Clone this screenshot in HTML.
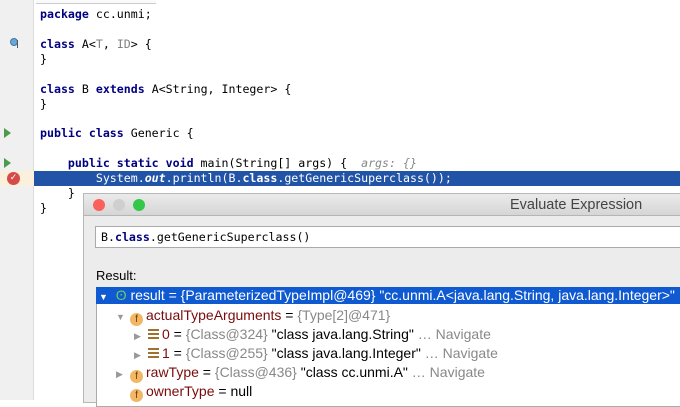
<!DOCTYPE html>
<html><head><style>
*{margin:0;padding:0;box-sizing:border-box}
body{width:680px;height:400px;overflow:hidden;background:#fff;position:relative;font-family:"DejaVu Sans Mono",monospace}
.gut{position:absolute;left:0;top:0;width:34px;height:400px;background:#f0f0f0;border-right:1px solid #ddd}
.l{position:absolute;left:40px;font-size:11.6px;line-height:15px;white-space:pre;color:#000}
.k{color:#000080;font-weight:bold}
.g{color:#808080}
.sel{position:absolute;left:34px;top:171px;width:646px;height:15px;background:#2154a6}
.run{position:absolute;left:4px;width:0;height:0;border-left:7px solid #4c9a4c;border-top:5px solid transparent;border-bottom:5px solid transparent}
.dlg{position:absolute;left:83px;top:193px;width:600px;height:210px;background:#ececec;border:1px solid #b8b8b8;font-family:"Liberation Sans",sans-serif}
.tb{height:22px;background:linear-gradient(#ebebeb,#d6d6d6);border-bottom:1px solid #b5b5b5;position:relative}
.dot{position:absolute;top:5px;width:12px;height:12px;border-radius:50%}
.row{position:absolute;left:12px;width:590px;height:19px;font-size:14px;line-height:19px;white-space:nowrap;color:#000}
.f{display:inline-block;width:13px;height:13px;border-radius:50%;background:#f2b765;color:#6b3c00;font-size:10px;line-height:13px;text-align:center;vertical-align:-2px;margin-right:3px}
.arr{color:#999;font-size:9px;display:inline-block;width:14px}
.n{color:#7a0b0b}
.gr{color:#888}
.bars{display:inline-block;width:11px;height:11px;vertical-align:-1px;margin-right:3px;background:repeating-linear-gradient(#a07030 0 2px,transparent 2px 4px)}
</style></head><body>
<div class="gut"></div>
<div style="position:absolute;left:36px;top:0;width:120px;height:4px;border-bottom:1px solid #ccc;background:#fafafa"></div>
<div style="position:absolute;left:10px;top:38px;width:8px;height:8px;border-radius:50%;background:#6aa6d6;border:1px solid #3a78b0"></div>
<div style="position:absolute;left:17px;top:40px;width:1px;height:8px;background:#555"></div>
<div class="run" style="top:128px"></div>
<div class="run" style="top:158px"></div>
<div style="position:absolute;left:0;top:171px;width:34px;height:15px;background:#faf0dc"></div>
<div style="position:absolute;left:7px;top:172px;width:13px;height:13px;border-radius:50%;background:#d64a4a;color:#fff;font-size:9px;line-height:13px;text-align:center;font-family:'DejaVu Sans'">✓</div>
<div class="sel"></div>
<div class="l" style="top:7px"><span class="k">package</span> cc.unmi;</div>
<div class="l" style="top:37px"><span class="k">class</span> A&lt;<span class="g">T</span>, <span class="g">ID</span>&gt; {</div>
<div class="l" style="top:52px">}</div>
<div class="l" style="top:82px"><span class="k">class</span> B <span class="k">extends</span> A&lt;String, Integer&gt; {</div>
<div class="l" style="top:97px">}</div>
<div class="l" style="top:126px"><span class="k">public class</span> Generic {</div>
<div class="l" style="top:156px">    <span class="k">public static void</span> main(String[] args) {  <i style="color:#888">args: {}</i></div>
<div class="l" style="top:171px;color:#fff">        System.<b><i>out</i></b>.println(B.<b>class</b>.getGenericSuperclass());</div>
<div class="l" style="top:186px">    }</div>
<div class="l" style="top:201px">}</div>
<div class="dlg">
 <div class="tb">
  <div class="dot" style="left:9px;background:#fc605c"></div>
  <div class="dot" style="left:29px;background:#cfcfcf"></div>
  <div class="dot" style="left:49px;background:#34c84a"></div>
  <div style="position:absolute;left:426px;top:3px;font-size:14.5px;color:#444">Evaluate Expression</div>
 </div>
 <div style="position:absolute;left:11px;top:32px;width:590px;height:22px;background:#fff;border:1px solid #aaa;font-family:'DejaVu Sans Mono',monospace;font-size:11.6px;line-height:20px;padding-left:5px">B.<span class="k">class</span>.getGenericSuperclass()</div>
 <div style="position:absolute;left:12px;top:74px;font-size:13px">Result:</div>
 <div style="position:absolute;left:12px;top:93px;width:590px;height:120px;background:#fff;border:1px solid #aaa"></div>
 <div class="row" style="top:93px;height:17px;line-height:17px;background:#0f5ad0;color:#fff;padding-left:3px"><span style="font-size:9px">▼</span>&nbsp; <span style="color:#6c6">ʘ</span> result = {ParameterizedTypeImpl@469} "cc.unmi.A&lt;java.lang.String, java.lang.Integer&gt;"</div>
 <div class="row" style="top:112px;padding-left:20px"><span class="arr">▼</span><span class="f">f</span><span class="n">actualTypeArguments</span> = <span class="gr">{Type[2]@471}</span></div>
 <div class="row" style="top:131px;padding-left:38px"><span class="arr">▶</span><span class="bars"></span><span class="n">0</span> = <span class="gr">{Class@324}</span> "class java.lang.String" <span class="gr">… Navigate</span></div>
 <div class="row" style="top:150px;padding-left:38px"><span class="arr">▶</span><span class="bars"></span><span class="n">1</span> = <span class="gr">{Class@255}</span> "class java.lang.Integer" <span class="gr">… Navigate</span></div>
 <div class="row" style="top:169px;padding-left:20px"><span class="arr">▶</span><span class="f">f</span><span class="n">rawType</span> = <span class="gr">{Class@436}</span> "class cc.unmi.A" <span class="gr">… Navigate</span></div>
 <div class="row" style="top:188px;padding-left:34px"><span class="f">f</span><span class="n">ownerType</span> = null</div>
</div>
</body></html>
